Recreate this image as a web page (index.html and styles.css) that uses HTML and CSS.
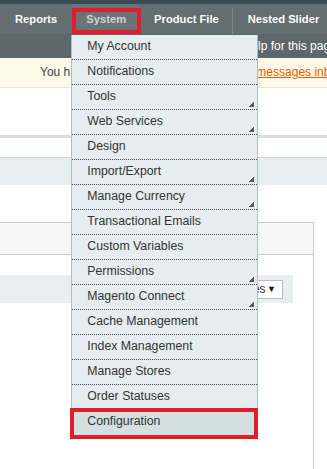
FILE: index.html
```html
<!DOCTYPE html>
<html lang="en">
<head>
  <meta charset="UTF-8" />
  <meta name="viewport" content="width=device-width, initial-scale=1" />
  <title>Admin - System menu</title>
  <link rel="stylesheet" href="styles.css">
</head>
<body>
  <!-- Header: dark strip, main nav and help bar -->
  <div class="header-top"></div>

  <nav class="nav">
    <ul class="nav-list">
      <li class="nav-item">Reports</li>
      <li class="nav-item nav-item-active">
        System
        <!-- System dropdown -->
        <ul class="dropdown">
          <li class="dd-item">My Account</li>
          <li class="dd-item">Notifications</li>
          <li class="dd-item has-sub">Tools</li>
          <li class="dd-item has-sub">Web Services</li>
          <li class="dd-item">Design</li>
          <li class="dd-item has-sub">Import/Export</li>
          <li class="dd-item has-sub">Manage Currency</li>
          <li class="dd-item">Transactional Emails</li>
          <li class="dd-item">Custom Variables</li>
          <li class="dd-item has-sub">Permissions</li>
          <li class="dd-item has-sub">Magento Connect</li>
          <li class="dd-item">Cache Management</li>
          <li class="dd-item">Index Management</li>
          <li class="dd-item">Manage Stores</li>
          <li class="dd-item">Order Statuses</li>
          <li class="dd-item dd-item-marked">Configuration</li>
        </ul>
      </li>
      <li class="nav-item nav-item-sep">Product File</li>
      <li class="nav-item">Nested Slider</li>
    </ul>
  </nav>

  <div class="help-bar">Get help for this page</div>

  <!-- Notice bar -->
  <div class="notice">
    You have 12 unread message(s) - Go to <a class="notice-link" href="#">messages inbox</a>.
  </div>

  <!-- Page content (mostly hidden behind the menu) -->
  <main class="content">
    <div class="rule"></div>
    <div class="section-bar"></div>

    <div class="box">
      <div class="box-head"></div>
      <div class="box-body">
        <div class="box-row">
          <div class="fake-select">Yes <span class="fake-select-arrow">▼</span></div>
        </div>
      </div>
    </div>
  </main>
</body>
</html>
```

FILE: styles.css
```css
/* ==============================================
   BASE
   ============================================== */
body {
  margin: 0;
  padding: 0;
  font-family: "Liberation Sans", Arial, sans-serif;
  font-size: 12px;
  color: #2f2f2f;
  background: #fff;
  overflow: hidden;
  height: 469px;
}

/* ==============================================
   HEADER
   ============================================== */
.header-top {
  height: 4px;
  background: #3c4a51;
}

.nav {
  height: 30px;
  background: #646d71;
}
.nav-list {
  list-style: none;
  margin: 0;
  padding: 0;
  display: flex;
  height: 100%;
}
.nav-item {
  position: relative;
  flex-shrink: 0;
  display: flex;
  align-items: center;
  padding: 0 15px;
  font-size: 11.2px;
  font-weight: bold;
  color: #fff;
  white-space: nowrap;
}
.nav-item-active {
  padding: 0 13px 0 14px;
  color: #cdd4d7;
  background: #6a7377;
}
/* red marker round "System" */
.nav-item-active::after {
  content: "";
  position: absolute;
  left: 0;
  top: 4px;
  right: -2px;
  bottom: 0;
  border: 4px solid #e21d2a;
}
.nav-item-sep {
  padding-right: 14px;
}
.nav-item-sep::after {
  content: "";
  position: absolute;
  right: 0;
  top: 4px;
  bottom: 0;
  width: 1px;
  background: #7b8488;
}

.help-bar {
  height: 24px;
  line-height: 24px;
  padding-left: 222px;
  background: #5d666a;
  color: #fff;
  white-space: nowrap;
}

/* ==============================================
   SYSTEM DROPDOWN
   ============================================== */
.dropdown {
  position: absolute;
  top: 31px;
  left: -1px;
  width: 185px;
  margin: 0;
  padding: 0;
  list-style: none;
  background: #e5edf0;
  border-left: 1px solid #b4bec1;
  border-right: 1px solid #b4bec1;
  z-index: 10;
  font-size: 12.3px;
  font-weight: normal;
  color: #333;
}
.dd-item {
  position: relative;
  height: 24px;
  line-height: 22px;
  padding-left: 15px;
  border-bottom: 1px dotted #4a4a4a;
}
.dd-item.has-sub::after {
  content: "";
  position: absolute;
  right: 3px;
  bottom: 2px;
  width: 7px;
  height: 7px;
  background:
    linear-gradient(135deg, transparent 45%, #e5edf0 45%, #e5edf0 58%, transparent 58%),
    linear-gradient(135deg, transparent 50%, #5a5a5a 50%);
}
.dd-item-marked {
  border-bottom: none;
  height: 25px;
  background: #d4dfe2;
}
.dd-item-marked::before {
  content: "";
  position: absolute;
  left: -2px;
  right: -1px;
  top: -2px;
  bottom: -4px;
  border: 4px solid #e21d2a;
}

/* ==============================================
   NOTICE BAR
   ============================================== */
.notice {
  height: 29px;
  line-height: 29px;
  padding-left: 40px;
  background: #fff9e9;
  border-bottom: 1px solid #eee2c2;
  color: #444;
  white-space: nowrap;
}
.notice-link {
  color: #eb5e00;
}

/* ==============================================
   CONTENT
   ============================================== */
.content {
  padding-top: 47px;
}
.rule {
  height: 3px;
  background: #dcdcdc;
  margin-bottom: 19px;
}
.section-bar {
  height: 27px;
  background: #e7eff0;
  border-top: 1px solid #cfd6d8;
  margin-bottom: 37px;
}
.box {
  margin: 0 13px 0 -1px;
  border: 1px solid #cccccc;
  border-bottom: none;
  height: 260px;
}
.box-head {
  height: 31px;
  background: #f6f6f6;
  border-bottom: 1px solid #cccccc;
}
.box-body {
  padding: 20px 20px 0 0;
}
.box-row {
  height: 28px;
  background: #e7eff0;
  display: flex;
  align-items: center;
  justify-content: flex-end;
  padding-right: 10px;
}
.fake-select {
  height: 17px;
  line-height: 17px;
  padding: 0 6px;
  width: 30px;
  background: #fff;
  border: 1px solid #bbbbbb;
  font-size: 12px;
  color: #333;
  display: flex;
  justify-content: space-between;
}
.fake-select-arrow {
  font-size: 9px;
  color: #111;
}
```
